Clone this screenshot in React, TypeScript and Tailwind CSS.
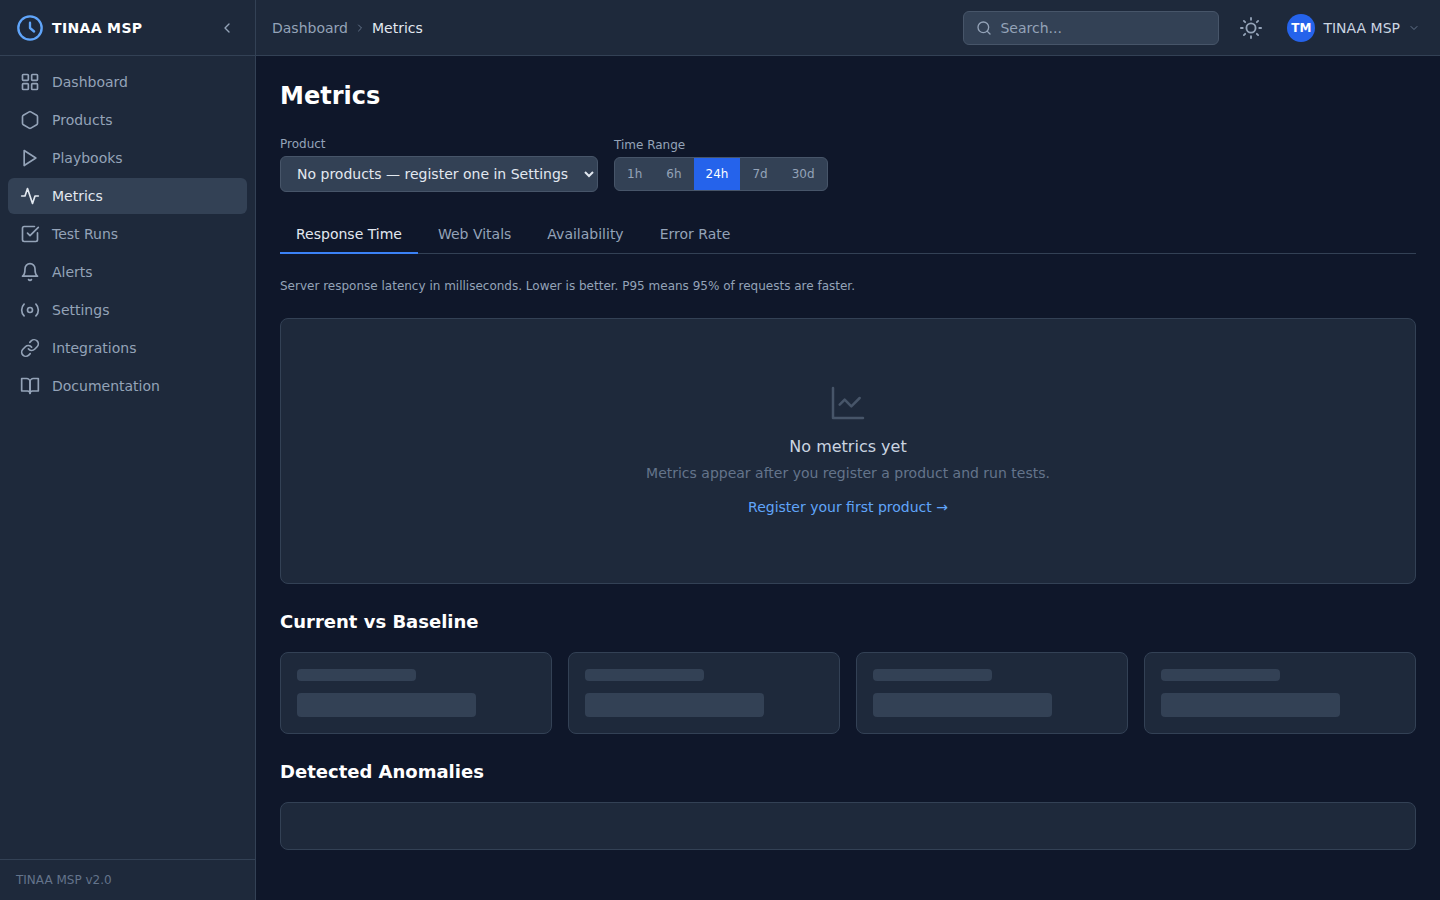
import React from "react";
import { LayoutGrid, Hexagon, Link, Search, ChevronLeft, ChevronDown, ChevronRight, SquareCheckBig } from "lucide-react";

type IconProps = { className?: string };
const Svg = ({ className, children, sw = 2 }: IconProps & { children: React.ReactNode; sw?: number }) => (
  <svg viewBox="0 0 24 24" fill="none" stroke="currentColor" strokeWidth={sw} strokeLinecap="round" strokeLinejoin="round" className={className}>
    {children}
  </svg>
);
const PlayIcon = (p: IconProps) => <Svg {...p}><polygon points="5 3 19 12 5 21 5 3" /></Svg>;
const ActivityIcon = (p: IconProps) => <Svg {...p}><polyline points="22 12 18 12 15 21 9 3 6 12 2 12" /></Svg>;
const BellIcon = (p: IconProps) => (
  <Svg {...p}>
    <path d="M18 8A6 6 0 0 0 6 8c0 7-3 9-3 9h18s-3-2-3-9" />
    <path d="M13.73 21a2 2 0 0 1-3.46 0" />
  </Svg>
);
const RadioIcon = (p: IconProps) => (
  <Svg {...p}>
    <circle cx="12" cy="12" r="3" />
    <path d="M19.075 4.933a10 10 0 0 1 0 14.134" />
    <path d="M4.925 19.067a10 10 0 0 1 0-14.134" />
  </Svg>
);
const BookIcon = (p: IconProps) => (
  <Svg {...p}>
    <path d="M2 3h6a4 4 0 0 1 4 4v14a3 3 0 0 0-3-3H2z" />
    <path d="M22 3h-6a4 4 0 0 0-4 4v14a3 3 0 0 1 3-3h7z" />
  </Svg>
);
const LogoIcon = (p: IconProps) => (
  <Svg {...p}>
    <circle cx="12" cy="12" r="10" />
    <polyline points="12 7.5 12 12 15.5 15" />
  </Svg>
);
const SunIcon = (p: IconProps) => (
  <Svg {...p}>
    <circle cx="12" cy="12" r="5" />
    <path d="M12 1v2M12 21v2M4.22 4.22l1.42 1.42M18.36 18.36l1.42 1.42M1 12h2M21 12h2M4.22 19.78l1.42-1.42M18.36 5.64l1.42-1.42" />
  </Svg>
);
const ChartIcon = (p: IconProps) => (
  <Svg {...p} sw={1.5}>
    <path d="M3 3v18h18" />
    <path d="m19 9-5 5-4-4-3 3" />
  </Svg>
);

const nav: { label: string; Icon: React.ComponentType<IconProps>; active?: boolean }[] = [
  { label: "Dashboard", Icon: LayoutGrid },
  { label: "Products", Icon: Hexagon },
  { label: "Playbooks", Icon: PlayIcon },
  { label: "Metrics", Icon: ActivityIcon, active: true },
  { label: "Test Runs", Icon: SquareCheckBig },
  { label: "Alerts", Icon: BellIcon },
  { label: "Settings", Icon: RadioIcon },
  { label: "Integrations", Icon: Link },
  { label: "Documentation", Icon: BookIcon },
];

const ranges = ["1h", "6h", "24h", "7d", "30d"];
const tabs = ["Response Time", "Web Vitals", "Availability", "Error Rate"];

export default function App() {
  return (
    <div className="flex h-screen overflow-hidden bg-[#0f172a] font-['DejaVu_Sans',sans-serif] text-[#e2e8f0]">
      <aside className="flex w-64 shrink-0 flex-col border-r border-[#334155] bg-[#1e293b]">
        <div className="flex h-14 shrink-0 items-center justify-between border-b border-[#334155] pl-4 pr-5">
          <div className="flex items-center gap-2">
            <LogoIcon className="h-7 w-7 text-[#60a5fa]" />
            <span className="text-sm font-bold tracking-[0.025em] text-white">TINAA MSP</span>
          </div>
          <ChevronLeft className="h-4 w-4 text-[#94a3b8]" />
        </div>
        <nav className="flex flex-1 flex-col gap-0.5 p-2">
          {nav.map(({ label, Icon, active }) => (
            <a
              key={label}
              className={`flex h-9 items-center gap-3 rounded-md px-3 text-sm ${active ? "bg-[#334155] text-[#e2e8f0]" : "text-[#94a3b8]"}`}
            >
              <Icon className="h-5 w-5 shrink-0" />
              {label}
            </a>
          ))}
        </nav>
        <div className="flex h-[41px] shrink-0 items-center border-t border-[#334155] px-4 text-xs text-[#64748b]">TINAA MSP v2.0</div>
      </aside>

      <div className="flex min-w-0 flex-1 flex-col">
        <header className="flex h-14 shrink-0 items-center justify-between border-b border-[#334155] bg-[#1e293b] pl-4 pr-5">
          <div className="flex items-center gap-1.5 text-sm">
            <span className="text-[#94a3b8]">Dashboard</span>
            <ChevronRight className="h-3 w-3 text-[#64748b]" />
            <span className="text-[#e2e8f0]">Metrics</span>
          </div>
          <div className="flex items-center">
            <div className="flex h-[34px] w-64 items-center gap-2 rounded-md border border-[#475569] bg-[#334155] px-3">
              <Search className="h-4 w-4 shrink-0 text-[#94a3b8]" />
              <input
                placeholder="Search..."
                className="w-full bg-transparent text-sm text-[#e2e8f0] outline-none placeholder:text-[#94a3b8]"
              />
            </div>
            <SunIcon className="ml-[21px] h-[22px] w-[22px] text-[#94a3b8]" />
            <div className="ml-[25px] flex items-center gap-2">
              <div className="flex h-7 w-7 items-center justify-center rounded-full bg-[#2563eb] text-xs font-bold text-white">TM</div>
              <span className="text-sm text-[#cbd5e1]">TINAA MSP</span>
              <ChevronDown className="h-3 w-3 text-[#64748b]" />
            </div>
          </div>
        </header>

        <main className="flex-1 overflow-hidden p-6">
          <h1 className="text-2xl font-bold leading-8 text-white">Metrics</h1>

          <div className="mt-6 flex items-center gap-4">
            <div className="flex flex-col gap-1">
              <label className="text-xs leading-4 text-[#94a3b8]">Product</label>
              <select className="h-9 w-[318px] rounded-md border border-[#475569] bg-[#334155] px-3 text-sm text-[#e2e8f0]">
                <option>No products — register one in Settings</option>
              </select>
            </div>
            <div className="flex flex-col gap-1">
              <label className="text-xs leading-4 text-[#94a3b8]">Time Range</label>
              <div className="flex h-[34px] overflow-hidden rounded-md border border-[#475569] bg-[#334155] text-xs">
                {ranges.map((r) => (
                  <button
                    key={r}
                    className={`px-3 ${r === "24h" ? "bg-[#2563eb] font-medium text-white" : "text-[#94a3b8]"}`}
                  >
                    {r}
                  </button>
                ))}
              </div>
            </div>
          </div>

          <div className="mt-6 flex gap-1 border-b border-[#334155]">
            {tabs.map((t, i) => (
              <div
                key={t}
                className={`-mb-px flex h-[38px] items-center border-b-2 px-4 text-sm ${i === 0 ? "border-[#3b82f6] text-[#e2e8f0]" : "border-transparent text-[#94a3b8]"}`}
              >
                {t}
              </div>
            ))}
          </div>

          <p className="mt-6 text-xs leading-4 text-[#94a3b8]">
            Server response latency in milliseconds. Lower is better. P95 means 95% of requests are faster.
          </p>

          <section className="mt-6 flex h-[266px] flex-col items-center rounded-lg border border-[#334155] bg-[#1e293b] pt-16">
            <ChartIcon className="h-10 w-10 text-[#475569]" />
            <h3 className="mt-3 text-base leading-6 text-[#cbd5e1]">No metrics yet</h3>
            <p className="mt-1 text-sm leading-5 text-[#64748b]">Metrics appear after you register a product and run tests.</p>
            <a className="mt-[14px] text-sm leading-5 text-[#60a5fa]">Register your first product →</a>
          </section>

          <h2 className="mt-6 text-lg font-bold leading-7 text-white">Current vs Baseline</h2>
          <div className="mt-4 grid grid-cols-4 gap-4">
            {[0, 1, 2, 3].map((i) => (
              <div key={i} className="rounded-lg border border-[#334155] bg-[#1e293b] p-4">
                <div className="h-3 w-1/2 rounded bg-[#334155]" />
                <div className="mt-3 h-6 w-3/4 rounded bg-[#334155]" />
              </div>
            ))}
          </div>

          <h2 className="mt-6 text-lg font-bold leading-7 text-white">Detected Anomalies</h2>
          <div className="mt-4 h-12 rounded-lg border border-[#334155] bg-[#1e293b]" />
        </main>
      </div>
    </div>
  );
}
